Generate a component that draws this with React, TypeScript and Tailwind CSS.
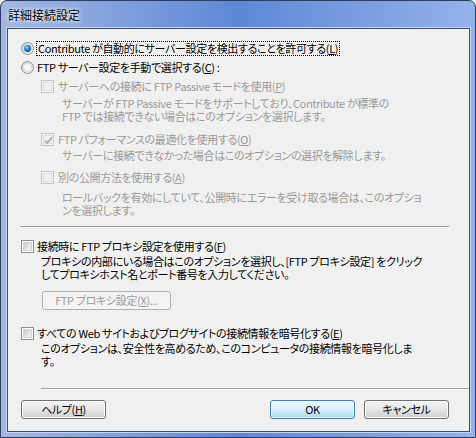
import React from 'react';

const font = "font-['Noto_Sans_CJK_JP','Noto_Sans',sans-serif] [font-feature-settings:'palt']";

function Radio({ checked }: { checked?: boolean }) {
  return (
    <svg width="13" height="13" viewBox="0 0 13 13" className="shrink-0">
      <defs>
        <linearGradient id={checked ? 'rbOn' : 'rbOff'} x1="0" y1="0" x2="1" y2="1">
          <stop offset="0" stopColor="#d7d7d7" />
          <stop offset="1" stopColor="#ffffff" />
        </linearGradient>
        <radialGradient id="rbDot" cx="0.4" cy="0.35" r="0.7">
          <stop offset="0" stopColor="#a6e3ff" />
          <stop offset="0.45" stopColor="#2a8ad4" />
          <stop offset="1" stopColor="#0a3f80" />
        </radialGradient>
      </defs>
      <circle cx="6.5" cy="6.5" r="6" fill={`url(#${checked ? 'rbOn' : 'rbOff'})`} stroke="#8e8f8f" strokeWidth="1" />
      <circle cx="6.5" cy="6.5" r="4.3" fill="#f4f4f4" stroke="#c9c9c9" strokeWidth="0.8" />
      {checked && <circle cx="6.5" cy="6.5" r="3.4" fill="url(#rbDot)" />}
    </svg>
  );
}

function Check({ checked, disabled }: { checked?: boolean; disabled?: boolean }) {
  return (
    <span
      className={`relative shrink-0 w-[13px] h-[13px] border ${
        disabled ? 'border-[#c5c5c5] bg-[#f4f4f4]' : 'border-[#8e8f8f] bg-white'
      } flex items-center justify-center`}
    >
      <span
        className={`w-[9px] h-[9px] ${
          disabled ? 'bg-[#f0f0f0] border border-[#dedede]' : 'bg-linear-to-br from-[#c5c9cf] to-[#f7f7f7] border border-[#d0d3d7]'
        }`}
      />
      {checked && (
        <svg width="11" height="11" viewBox="0 0 11 11" className="absolute left-px top-px">
          <path d="M2 5.5 L4.3 8 L9 2" fill="none" stroke={disabled ? '#a6a6a6' : '#2b4d7a'} strokeWidth="1.6" />
        </svg>
      )}
    </span>
  );
}

function Btn({ children, w, kind }: { children: React.ReactNode; w: string; kind?: 'default' | 'disabled' }) {
  const base = `h-[19px] ${w} rounded-[3px] border flex items-center justify-center leading-none`;
  if (kind === 'default')
    return (
      <div className={`${base} border-[#3c7fb1] bg-linear-to-b from-[#eaf6fd] via-[#d9f0fc] to-[#a7d9f5] text-black shadow-[inset_0_0_0_1px_#ffffffa0]`}>
        {children}
      </div>
    );
  if (kind === 'disabled')
    return <div className={`${base} border-[#adb2b5] bg-[#f4f4f4] text-[#9a9a9a]`}>{children}</div>;
  return (
    <div className={`${base} border-[#707070] bg-linear-to-b from-[#f2f2f2] via-[#e6e6e6] to-[#cfcfcf] text-black shadow-[inset_0_0_0_1px_#fcfcfc]`}>
      {children}
    </div>
  );
}

const U = ({ c }: { c: string }) => <span className="underline underline-offset-1">{c}</span>;

export default function App() {
  const gray = 'text-[#9a9a9a]';
  return (
    <div className={`${font} w-[476px] h-[438px] bg-[#f0f0f0]`}>
      <div className="w-[476px] h-[438px] rounded-t-[7px] border border-[#2d3d5f] bg-linear-to-r from-[#a2b7e2] via-[#5f87d6] to-[#95b2ea] flex flex-col pl-[6px] pr-[5px] pb-[5px]">
        <div className="h-[27px] flex items-center pl-[1px] text-[12px] text-black [text-shadow:0_0_6px_#ffffff,0_0_3px_#ffffff]">
          詳細接続設定
        </div>
        <div className="flex-1 overflow-hidden border border-[#3b4c6e] bg-[#f0f0f0] text-[11px] tracking-[-0.35px] leading-[16px] text-black whitespace-nowrap shadow-[0_0_0_1px_#c9d6f0]">
          <div className="flex flex-col">
            <div className="mt-[11px] pl-[13px] h-[16px] flex items-center gap-[2px]">
              <Radio checked />
              <span className="border border-dotted border-black px-px leading-[13px]">
                Contribute が自動的にサーバー設定を検出することを許可する(<U c="L" />)
              </span>
            </div>
            <div className="mt-[3px] pl-[13px] h-[16px] flex items-center gap-[3px]">
              <Radio />
              <span>
                FTP サーバー設定を手動で選択する(<U c="C" />) :
              </span>
            </div>

            <div className={`mt-[3px] pl-[33px] h-[16px] flex items-center gap-[4px] ${gray}`}>
              <Check disabled />
              <span>
                サーバーへの接続に FTP Passive モードを使用(<U c="P" />)
              </span>
            </div>
            <p className={`mt-[3px] pl-[54px] leading-[13px] ${gray}`}>
              サーバーが FTP Passive モードをサポートしており、Contribute が標準の
              <br />
              FTP では接続できない場合はこのオプションを選択します。
            </p>

            <div className={`mt-[8px] pl-[33px] h-[16px] flex items-center gap-[4px] ${gray}`}>
              <Check disabled checked />
              <span>
                FTP パフォーマンスの最適化を使用する(<U c="O" />)
              </span>
            </div>
            <p className={`mt-[2px] pl-[54px] leading-[13px] ${gray}`}>
              サーバーに接続できなかった場合はこのオプションの選択を解除します。
            </p>

            <div className={`mt-[7px] pl-[33px] h-[16px] flex items-center gap-[4px] ${gray}`}>
              <Check disabled />
              <span>
                別の公開方法を使用する(<U c="A" />)
              </span>
            </div>
            <p className={`mt-[6px] pl-[54px] leading-[13px] ${gray}`}>
              ロールバックを有効にしていて、公開時にエラーを受け取る場合は、このオプショ
              <br />
              ンを選択します。
            </p>

            <div className="mt-[9px] ml-[12px] w-[429px] border-t border-[#a0a0a0] border-b border-b-white" />

            <div className="mt-[10px] pl-[13px] h-[16px] flex items-center gap-[3px]">
              <Check />
              <span>
                接続時に FTP プロキシ設定を使用する(<U c="F" />)
              </span>
            </div>
            <p className="mt-[1px] pl-[33px] leading-[13px]">
              プロキシの内部にいる場合はこのオプションを選択し、[FTP プロキシ設定] をクリック
              <br />
              してプロキシホスト名とポート番号を入力してください。
            </p>

            <div className="mt-[10px] pl-[34px]">
              <Btn w="w-[129px]" kind="disabled">
                FTP プロキシ設定(<U c="X" />)...
              </Btn>
            </div>

            <div className="mt-[15px] pl-[13px] h-[16px] flex items-center gap-[3px]">
              <Check />
              <span>
                すべての Web サイトおよびブログサイトの接続情報を暗号化する(<U c="E" />)
              </span>
            </div>
            <p className="mt-[1px] pl-[33px] leading-[13px]">
              このオプションは、安全性を高めるため、このコンピュータの接続情報を暗号化しま
              <br />
              す。
            </p>

            <div className="mt-[20px] ml-[33px] border-t border-[#a0a0a0] border-b border-b-white" />

            <div className="mt-[10px] pl-[13px] pr-[20px] flex items-center">
              <Btn w="w-[85px]">
                ヘルプ(<U c="H" />)
              </Btn>
              <div className="flex-1" />
              <Btn w="w-[85px]" kind="default">
                OK
              </Btn>
              <div className="w-[9px]" />
              <Btn w="w-[85px]">キャンセル</Btn>
            </div>
          </div>
        </div>
      </div>
    </div>
  );
}
